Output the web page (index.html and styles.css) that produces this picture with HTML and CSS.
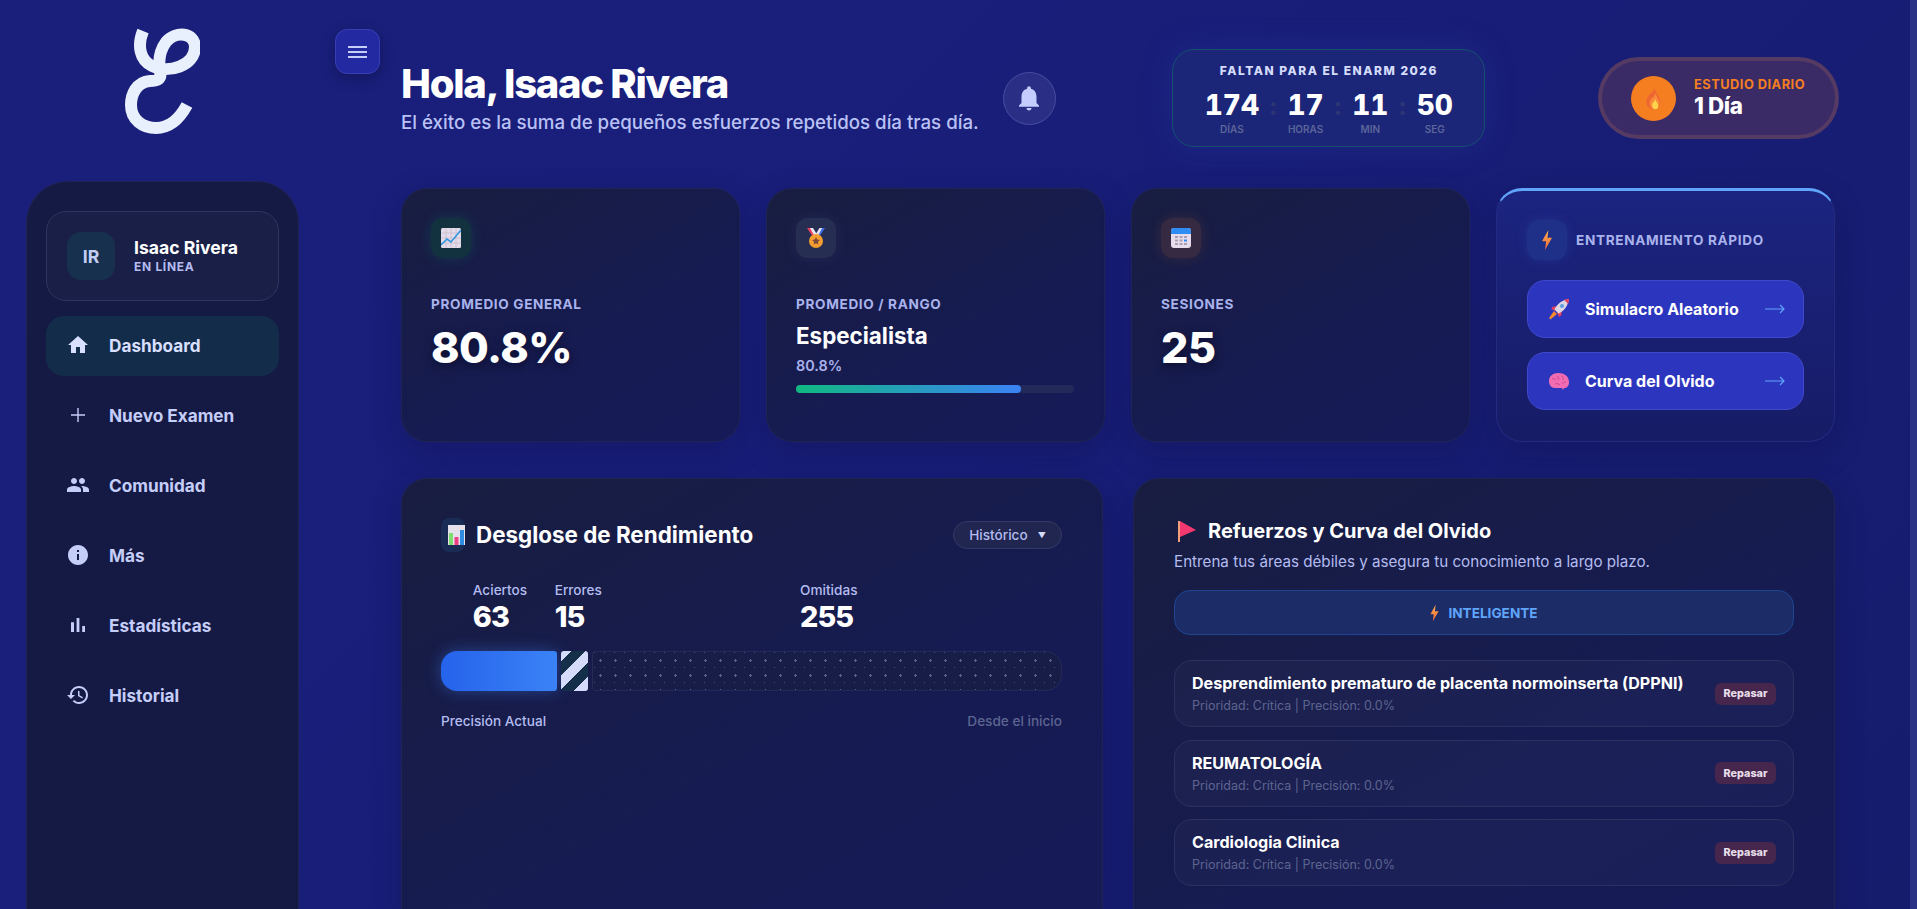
FILE: index.html
```html
<!DOCTYPE html>
<html lang="es">
<head>
<meta charset="utf-8">
<title>Dashboard</title>
<link rel="stylesheet" href="styles.css">
</head>
<body>
<svg class="defs" width="0" height="0" aria-hidden="true">
  <defs>
    <linearGradient id="boltg" x1="0" y1="0" x2="0" y2="1"><stop offset="0" stop-color="#fdb04a"/><stop offset="1" stop-color="#f4683c"/></linearGradient>
    <symbol id="bolt" viewBox="0 0 12 22"><path fill="url(#boltg)" d="M7.5 0 0.5 12.5H5L3.8 22 11.5 8.5H6.6z"/></symbol>
  </defs>
</svg>
<div class="page">
  <aside class="side-col">
    <div class="logo">
      <svg width="80" height="110" viewBox="120 25 80 110"><path fill="none" stroke="#e9f0fd" stroke-width="12" d="M143 31C137 46 140 60 152 66C168 74 195 66 195 47C195 33 176 30 166 42C160 50 158 60 160 72C162 80 156 81 150 81C136 82 131 95 131 105C131 120 143 128 156 128C170 128 180 118 187 105"/></svg>
    </div>
    <nav class="sidebar">
      <div class="user-card">
        <div class="avatar">IR</div>
        <div>
          <div class="user-name">Isaac Rivera</div>
          <div class="user-status">EN LÍNEA</div>
        </div>
      </div>
      <a class="nav-item active"><svg viewBox="0 0 24 24"><path d="M10 20v-6h4v6h5v-8h3L12 3 2 12h3v8z"/></svg>Dashboard</a>
      <a class="nav-item"><svg viewBox="0 0 24 24"><path d="M19 12.700h-6.300V19h-1.400v-6.300H5v-1.400h6.300V5h1.400v6.300H19z"/></svg>Nuevo Examen</a>
      <a class="nav-item"><svg viewBox="0 0 24 24"><path d="M16 11c1.660 0 2.990-1.340 2.990-3S17.660 5 16 5c-1.660 0-3 1.340-3 3s1.340 3 3 3zm-8 0c1.660 0 2.990-1.340 2.990-3S9.660 5 8 5C6.340 5 5 6.340 5 8s1.340 3 3 3zm0 2c-2.330 0-7 1.170-7 3.500V19h14v-2.500c0-2.330-4.670-3.500-7-3.500zm8 0c-.290 0-.620.020-.970.050 1.160.840 1.970 1.970 1.970 3.450V19h6v-2.500c0-2.330-4.670-3.500-7-3.500z"/></svg>Comunidad</a>
      <a class="nav-item"><svg viewBox="0 0 24 24"><path d="M12 2C6.480 2 2 6.480 2 12s4.480 10 10 10 10-4.480 10-10S17.520 2 12 2zm1 15h-2v-6h2v6zm0-8h-2V7h2v2z"/></svg>Más</a>
      <a class="nav-item"><svg viewBox="0 0 24 24"><path d="M5 9.200h3V19H5zM10.600 5h2.800v14h-2.800zm5.600 8H19v6h-2.800z"/></svg>Estadísticas</a>
      <a class="nav-item"><svg viewBox="0 0 24 24"><path d="M13 3c-4.970 0-9 4.030-9 9H1l3.890 3.890.070.140L9 12H6c0-3.870 3.130-7 7-7s7 3.130 7 7-3.130 7-7 7c-1.930 0-3.680-.790-4.940-2.060l-1.420 1.420C8.270 19.990 10.510 21 13 21c4.970 0 9-4.030 9-9s-4.030-9-9-9zm-1 5v5l4.280 2.540.720-1.210-3.500-2.080V8H12z"/></svg>Historial</a>
    </nav>
  </aside>

  <div class="toggle-col">
    <button class="menu-btn"><svg width="19" height="14" viewBox="0 0 19 14"><path fill="#c5cdf9" d="M0 1h19v2H0zM0 6h19v2H0zM0 11h19v2H0z"/></svg></button>
  </div>

  <main class="content">
    <header class="top">
      <div class="greet-group">
        <div>
          <h1 class="hello">Hola, Isaac Rivera</h1>
          <p class="motto">El éxito es la suma de pequeños esfuerzos repetidos día tras día.</p>
        </div>
        <div class="bell"><svg width="30" height="30" viewBox="0 0 24 24"><path fill="#c5cdff" d="M12 22c1.100 0 2-.900 2-2h-4c0 1.100.890 2 2 2zm6-6v-5c0-3.070-1.640-5.640-4.500-6.320V4c0-.830-.670-1.500-1.500-1.500s-1.500.670-1.500 1.500v.680C7.630 5.360 6 7.920 6 11v5l-2 2v1h16v-1l-2-2z"/></svg></div>
      </div>
      <div class="timer">
        <div class="timer-title">FALTAN PARA EL ENARM 2026</div>
        <div class="timer-row">
          <div class="tunit"><span class="tnum">174</span><span class="tlab">DÍAS</span></div>
          <span class="tsep">:</span>
          <div class="tunit"><span class="tnum">17</span><span class="tlab">HORAS</span></div>
          <span class="tsep">:</span>
          <div class="tunit"><span class="tnum">11</span><span class="tlab">MIN</span></div>
          <span class="tsep">:</span>
          <div class="tunit"><span class="tnum">50</span><span class="tlab">SEG</span></div>
        </div>
      </div>
      <div class="streak">
        <div class="flame"><svg width="18" height="24" viewBox="0 0 22 30"><path fill="#e9573f" opacity=".6" d="M13 1C14 7 5 10 3 17C1 24 6 29 11 29C17 29 21 24 20 18C19 13 14 9 13 1z"/><path fill="#f98a3a" d="M14 8C15 13 8 14 7 20C6 25 9 29 13 29C17 29 20 25 19 20C18 16 15 13 14 8z"/><path fill="#fdd34c" d="M13.500 16C14 20 10 20 10 24C10 27 12 29 14 29C16 29 18 27 17.500 24C17 21 14.500 19 13.500 16z"/></svg></div>
        <div>
          <div class="streak-label">ESTUDIO DIARIO</div>
          <div class="streak-val">1 Día</div>
        </div>
      </div>
    </header>

    <section class="cards">
      <article class="stat-card">
        <div class="stat-icon glow-green">
          <svg width="20" height="20" viewBox="0 0 20 20"><rect width="20" height="20" rx="1.500" fill="#e4dbe9"/><path stroke="#c7bccd" stroke-width=".8" fill="none" d="M0 5h20M0 10h20M0 15h20M5 0v20M10 0v20M15 0v20"/><path stroke="#2f97e0" stroke-width="1.600" fill="none" d="M0 17L6 11L10 14L20 2"/></svg>
        </div>
        <div class="stat-label">PROMEDIO GENERAL</div>
        <div class="stat-value">80.8%</div>
      </article>
      <article class="stat-card">
        <div class="stat-icon glow-slate">
          <svg width="20" height="20" viewBox="0 0 20 20"><path fill="#e8415f" d="M1 0h4l6 9H7z"/><path fill="#e8e4f2" d="M4 0h3l5 8-3 1z"/><path fill="#3f6fe0" d="M19 0h-4l-6 9h4z"/><path fill="#e8e4f2" d="M16 0h-2.500l-5 8 3 1z"/><circle cx="10" cy="13" r="7" fill="#f59e2f"/><path fill="#7a4a3a" d="M10 9l1.200 2.600 2.800.300-2.100 1.900.600 2.800-2.500-1.400-2.500 1.400.600-2.800-2.100-1.900 2.800-.300z"/></svg>
        </div>
        <div class="stat-label">PROMEDIO / RANGO</div>
        <div class="rank-name">Especialista</div>
        <div class="rank-pct">80.8%</div>
        <div class="track"><div class="fill"></div></div>
      </article>
      <article class="stat-card">
        <div class="stat-icon glow-brown">
          <svg width="20" height="20" viewBox="0 0 20 20"><rect width="20" height="20" rx="3" fill="#e6dcec"/><path fill="#2f8cf5" d="M0 6V3a3 3 0 0 1 3-3h14a3 3 0 0 1 3 3v3z"/><path fill="#a89fb3" d="M4 8h3v2H4zM8.500 8h3v2h-3zM13 8h3v2h-3zM4 11.500h3v2H4zM8.500 11.500h3v2h-3zM4 15h3v2H4zM8.500 15h3v2h-3zM13 15h3v2h-3z"/><path fill="#2f8cf5" d="M13 11.500h3v2h-3z"/></svg>
        </div>
        <div class="stat-label">SESIONES</div>
        <div class="stat-value">25</div>
      </article>
      <article class="quick-card">
        <div class="quick-head">
          <div class="quick-icon"><svg width="12" height="20"><use href="#bolt"/></svg></div>
          <span class="stat-label">ENTRENAMIENTO RÁPIDO</span>
        </div>
        <a class="quick-btn">
          <svg class="qicon" width="22" height="22" viewBox="0 0 22 22"><path fill="#f58a2f" d="M6 13l3 3-6 5c-1 .600-2-.400-1.600-1.400z"/><path fill="#e8415f" d="M5 8.500h5L8 13 3 11zM13.500 17v-5L9 14l2 5z"/><path fill="#dcd6e4" d="M6.500 11.500C9 6 14 2 21 1c-1 7-5 12-10.500 14.500z"/><path fill="#e8415f" d="M16 1.800c1.600-.400 3.300-.700 5-.800-.100 1.700-.400 3.400-.800 5z"/><circle cx="14" cy="8" r="2" fill="#5da0e0"/></svg>
          <span class="quick-txt">Simulacro Aleatorio</span>
          <svg class="arrow" width="20" height="10" viewBox="0 0 20 10"><path fill="none" stroke="#60a5fa" stroke-width="1.200" d="M0 5h19M15 1l4 4-4 4"/></svg>
        </a>
        <a class="quick-btn">
          <svg class="qicon" width="22" height="22" viewBox="0 0 22 22"><path fill="#f26cb3" d="M1 11C1 6 5 3 10 3c6 0 11 3 11 9 0 4-2 6-5 6l-1 2-1-2H7C3 18 1 15 1 11z"/><path fill="none" stroke="#c94a93" d="M4 9c2-1 3 0 4 1M9 6c2 1 2 3 1 4M13 6c2 0 3 2 2 4M7 14c2-1 4 0 5 1M14 13c2 0 4-1 4-2"/></svg>
          <span class="quick-txt">Curva del Olvido</span>
          <svg class="arrow" width="20" height="10" viewBox="0 0 20 10"><path fill="none" stroke="#60a5fa" stroke-width="1.200" d="M0 5h19M15 1l4 4-4 4"/></svg>
        </a>
      </article>
    </section>

    <section class="panels">
      <article class="panel">
        <div class="perf-head">
          <div class="perf-title">
            <span class="perf-icon"><svg width="17" height="20" viewBox="0 0 17 20"><rect width="17" height="20" fill="#e6e0ea"/><rect x="1" y="8" width="4" height="12" fill="#7fdc6f"/><rect x="6.500" y="12" width="4" height="8" fill="#ee3f86"/><rect x="12" y="5" width="4" height="15" fill="#2f8ce0"/></svg></span>
            <h2 class="panel-title">Desglose de Rendimiento</h2>
          </div>
          <div class="select">Histórico<span class="caret">▼</span></div>
        </div>
        <div class="breakdown">
          <div class="bk g63"><div class="nudge-a"><div class="bk-label">Aciertos</div><div class="bk-val">63</div></div></div>
          <div class="bk g15"><div class="nudge-l"><div class="bk-label">Errores</div><div class="bk-val">15</div></div></div>
          <div class="bk g255"><div class="nudge-s"><div class="bk-label">Omitidas</div><div class="bk-val">255</div></div></div>
        </div>
        <div class="bar">
          <div class="seg g63 seg-blue"></div>
          <div class="seg g15 seg-stripe"></div>
          <div class="seg g255 seg-dots"></div>
        </div>
        <div class="bar-foot"><span>Precisión Actual</span><span class="muted">Desde el inicio</span></div>
      </article>

      <article class="panel refs">
        <div class="ref-head">
          <svg width="24" height="22" viewBox="0 0 24 22"><path fill="#f2a07a" d="M4 1h2v21H4z"/><path fill="#f2386f" d="M6 1l16 9L6 17z"/></svg>
          <h2 class="panel-title small">Refuerzos y Curva del Olvido</h2>
        </div>
        <p class="ref-sub">Entrena tus áreas débiles y asegura tu conocimiento a largo plazo.</p>
        <a class="smart-btn"><svg width="9" height="18"><use href="#bolt"/></svg>INTELIGENTE</a>
        <div class="ref-list">
          <div class="ref-item">
            <div><div class="ref-name">Desprendimiento prematuro de placenta normoinserta (DPPNI)</div><div class="ref-meta">Prioridad: Crítica | Precisión: 0.0%</div></div>
            <a class="review">Repasar</a>
          </div>
          <div class="ref-item">
            <div><div class="ref-name">REUMATOLOGÍA</div><div class="ref-meta">Prioridad: Crítica | Precisión: 0.0%</div></div>
            <a class="review">Repasar</a>
          </div>
          <div class="ref-item">
            <div><div class="ref-name">Cardiologia Clinica</div><div class="ref-meta">Prioridad: Crítica | Precisión: 0.0%</div></div>
            <a class="review">Repasar</a>
          </div>
        </div>
      </article>
    </section>
  </main>
</div>
<div class="scrollbar"></div>
</body>
</html>
```

FILE: styles.css
```css
* { box-sizing: border-box; }
html { background: #181e78; overflow: hidden; }
body {
  margin: 0;
  font-family: Inter, "Liberation Sans", sans-serif;
  color: #fff;
  background: linear-gradient(135deg, #1a1f7c 0%, #181e78 50%, #161c6c 100%);
  height: 909px;
  overflow: hidden;
}
h1, h2, p { margin: 0; }
.defs { position: absolute; }
.scrollbar { position: fixed; top: 0; right: 0; bottom: 0; width: 7px; background: #2a3285; }
.page { display: flex; align-items: stretch; min-height: 960px; }

.side-col { width: 299px; margin-left: 26px; display: flex; flex-direction: column; flex: none; }
.logo { height: 181px; padding-top: 25px; padding-left: 94px; }
.logo svg { display: block; }
.sidebar {
  flex: 1;
  background: #151a45;
  border: 1px solid #1f2450;
  border-bottom: 0;
  border-radius: 42px 42px 0 0;
  padding: 29px 19px 0;
  display: flex;
  flex-direction: column;
  gap: 10px;
  width: 273px;
}
.user-card {
  height: 90px;
  border: 1px solid #2f3560;
  border-radius: 20px;
  background: #1a1f48;
  display: flex;
  align-items: center;
  gap: 19px;
  padding-left: 20px;
  margin-bottom: 5px;
}
.avatar {
  width: 48px; height: 48px; border-radius: 14px;
  background: #17304d; color: #c5cdf5;
  display: flex; align-items: center; justify-content: center;
  font-size: 17.6px; font-weight: 700;
}
.user-name { font-size: 17.6px; font-weight: 700; line-height: 22px; }
.user-status { font-size: 12px; font-weight: 700; color: #b4bcf0; letter-spacing: .7px; line-height: 16px; }
.nav-item {
  height: 60px; border-radius: 18px;
  display: flex; align-items: center; gap: 19px;
  padding: 0 0 2px 20px;
  font-size: 17.2px; font-weight: 700; color: #c5cdf9;
}
.nav-item svg { width: 24px; height: 24px; fill: #c5cdf9; flex: none; }
.nav-item.active { background: #132c4a; color: #d8dfff; }
.nav-item.active svg { fill: #d8dfff; }

.toggle-col { width: 45px; margin-left: 10px; margin-right: 21px; flex: none; padding-top: 29px; }
.menu-btn {
  width: 45px; height: 45px; padding: 0;
  border-radius: 12px;
  background: #2329a0;
  border: 1px solid #383fb5;
  box-shadow: 0 4px 14px rgba(0,0,10,.25);
  display: flex; align-items: center; justify-content: center;
}

.content { width: 1434px; flex: none; padding-top: 49px; }
.top { display: flex; align-items: center; justify-content: space-between; height: 98px; }
.greet-group { display: flex; align-items: center; gap: 24px; }
.hello { font-size: 40px; font-weight: 800; letter-spacing: -1.28px; line-height: 46px; margin-top: -1px; }
.motto { font-size: 18.72px; font-weight: 500; color: #b9c1f5; line-height: 24px; margin-top: 4px; }
.bell {
  width: 53px; height: 53px; border-radius: 50%;
  background: #2a2f85; border: 1px solid #474da0;
  display: flex; align-items: center; justify-content: center;
}
.timer {
  width: 313px; height: 98px;
  border: 1px solid #15506f;
  border-radius: 22px;
  background: #1b2678;
  box-shadow: 0 0 30px rgba(40,60,170,.3);
  display: flex; flex-direction: column; align-items: center;
  padding-top: 13px;
}
.timer-title { font-size: 12px; font-weight: 800; letter-spacing: 1.5px; color: #d5dcfb; line-height: 16px; }
.timer-row { display: flex; align-items: flex-start; gap: 10px; margin-top: 8px; }
.tunit { display: flex; flex-direction: column; align-items: center; }
.tnum { font-size: 28px; font-weight: 800; line-height: 36px; font-variant-numeric: tabular-nums; }
.tlab { font-size: 10px; font-weight: 600; color: #5c6598; line-height: 12px; }
.tsep { font-size: 24px; font-weight: 800; color: #2d3575; line-height: 40px; }
.streak {
  width: 233px; height: 74px;
  border-radius: 37px;
  background: #3a2b66;
  box-shadow: 0 0 0 4px #553a63;
  display: flex; align-items: center; gap: 18px;
  padding-left: 29px;
}
.flame {
  width: 45px; height: 45px; border-radius: 50%; background: #f57f20;
  display: flex; align-items: center; justify-content: center;
}
.streak-label { font-size: 12.8px; font-weight: 700; color: #f57f20; letter-spacing: .5px; line-height: 16px; }
.streak-val { font-size: 22.4px; font-weight: 800; line-height: 26px; letter-spacing: -.4px; }

.cards { display: grid; grid-template-columns: repeat(4, 339px); gap: 26px; margin-top: 41px; }
.stat-card, .panel {
  border: 1px solid #1f2450;
  background: linear-gradient(150deg, #181d40 0%, #161b52 60%, #161a58 100%);
  box-shadow: 0 10px 30px rgba(10,12,60,.25);
}
.stat-card { border-radius: 26px; padding: 29px; height: 254px; }
.stat-icon { width: 40px; height: 40px; border-radius: 12px; display: flex; align-items: center; justify-content: center; margin-bottom: 38px; }
.glow-green { background: #12323f; box-shadow: 0 0 14px rgba(16,185,129,.18); }
.glow-slate { background: #262e52; box-shadow: 0 0 14px rgba(120,130,190,.12); }
.glow-brown { background: #352a42; box-shadow: 0 0 14px rgba(245,127,32,.14); }
.stat-label { font-size: 13.6px; font-weight: 700; color: #a9b2ec; letter-spacing: .65px; line-height: 16px; }
.stat-value { font-size: 43px; font-weight: 800; letter-spacing: -.5px; line-height: 48px; margin-top: 11px; text-shadow: 0 3px 10px rgba(0,0,20,.5); }
.rank-name { font-size: 22.4px; font-weight: 700; line-height: 28px; margin-top: 10px; }
.rank-pct { font-size: 14.4px; font-weight: 600; color: #a9b2ec; line-height: 20px; margin-top: 6px; }
.track { height: 8px; border-radius: 4px; background: #232a5a; margin-top: 9px; width: 278px; }
.fill { width: 80.8%; height: 100%; border-radius: 4px; background: linear-gradient(90deg, #10b981, #3b82f6); }

.quick-card {
  border: 1px solid #232a80;
  border-top: 3px solid #60a5fa;
  border-radius: 26px;
  background: linear-gradient(180deg, #1b2480 0%, #171c66 100%);
  padding: 29px 30px 0;
  height: 254px;
  box-shadow: 0 10px 30px rgba(10,12,60,.25);
}
.quick-head { display: flex; align-items: center; gap: 9px; margin-bottom: 20px; }
.quick-icon { width: 40px; height: 40px; border-radius: 12px; background: #1f3088; box-shadow: 0 0 12px rgba(60,90,200,.25); display: flex; align-items: center; justify-content: center; }
.quick-btn {
  height: 58px; border-radius: 18px;
  background: #2c35bd; border: 1px solid #4049cc;
  display: flex; align-items: center; padding: 0 18px 0 20px;
  margin-bottom: 14px;
  font-size: 16px; font-weight: 700;
}
.quick-txt { margin-left: 15px; }
.arrow { margin-left: auto; }

.panels { display: grid; grid-template-columns: 702px 702px; gap: 30px; margin-top: 36px; }
.panel { padding: 39px 40px 41px 39px; border-bottom: 0; border-radius: 26px 26px 0 0; }
.panel.refs { padding-left: 40px; }
.perf-head { display: flex; align-items: center; justify-content: space-between; height: 34px; }
.perf-title { display: flex; align-items: center; gap: 11px; }
.perf-icon { width: 24px; height: 34px; border-radius: 8px; background: #1a2b55; display: flex; align-items: center; justify-content: flex-end; }
.panel-title { font-size: 22.4px; font-weight: 700; line-height: 28px; }
.panel-title.small { font-size: 20px; line-height: 26px; }
.select {
  width: 109px; height: 28px; border-radius: 14px;
  border: 1px solid #333a66; background: #20264f;
  display: flex; align-items: center; justify-content: center; gap: 10px;
  font-size: 13.6px; font-weight: 500; color: #b4bcf0;
}
.caret { font-size: 8px; color: #d5dcfb; }
.breakdown { display: flex; gap: 4px; margin-top: 29px; }
.bk { display: flex; justify-content: center; min-width: 0; }
.nudge-a { margin-left: 2px; }
.nudge-l { margin-left: 7px; }
.nudge-s { margin-left: 3px; }
.bk-label { font-size: 13.6px; font-weight: 500; color: #b4bcf0; line-height: 18px; white-space: nowrap; }
.bk-val { font-size: 28.8px; font-weight: 800; letter-spacing: -1px; line-height: 36px; }
.g63 { flex: 63 1 0; }
.g15 { flex: 15 1 0; }
.g255 { flex: 255 1 0; }
.bar { display: flex; gap: 4px; height: 40px; margin-top: 16px; }
.seg { min-width: 0; }
.seg-blue { border-radius: 16px 3px 3px 16px; background: linear-gradient(90deg, #2563eb, #3b82f6); box-shadow: 0 0 16px rgba(59,130,246,.4); }
.seg-stripe { border-radius: 3px; background: repeating-linear-gradient(-45deg, #d5dcfb 0 10px, #152e4a 10px 20px); }
.seg-dots {
  border: 1px solid #232a58; border-radius: 3px 16px 16px 3px;
  background-color: #181d48;
  background-image: url("data:image/svg+xml,%3Csvg xmlns='http://www.w3.org/2000/svg' width='30' height='15'%3E%3Cpath fill='%235c6296' d='M7 7h1v1H7zM6 8h3v1H6zM7 9h1v1H7zM22 7h1v1h-1zM21 8h3v1h-3zM22 9h1v1h-1z'/%3E%3Cpath fill='%23464c80' d='M1 0h1v1H1zM11 0h1v1h-1zM21 0h1v1h-1z'/%3E%3C/svg%3E");
  background-size: 30px 15px;
}
.bar-foot { display: flex; justify-content: space-between; margin-top: 21px; font-size: 13.6px; font-weight: 500; line-height: 18px; color: #b4bcf0; }
.muted { color: #5d6590; }

.ref-head { display: flex; align-items: center; gap: 10px; height: 26px; }
.ref-sub { font-size: 15.2px; color: #b4bcf0; line-height: 22px; margin-top: 7px; }
.smart-btn {
  height: 45px; border-radius: 16px; margin-top: 17px;
  border: 1px solid #1e4590; background: #1b2c66;
  display: flex; align-items: center; justify-content: center; gap: 9px;
  font-size: 13.6px; font-weight: 700; color: #60a5fa;
}
.ref-list { margin-top: 25px; display: flex; flex-direction: column; gap: 12.5px; }
.ref-item {
  height: 67px; border: 1px solid #2c3260; border-radius: 18px;
  background: rgba(255,255,255,.025);
  padding: 11px 17px;
  display: flex; align-items: center; justify-content: space-between;
}
.ref-name { font-size: 16.1px; font-weight: 700; line-height: 22px; }
.ref-meta { font-size: 12.5px; color: #5d6590; line-height: 18px; margin-top: 3px; }
.review {
  width: 61px; height: 22px; border-radius: 6px; background: #47264d;
  display: flex; align-items: center; justify-content: center;
  font-size: 10.8px; font-weight: 800; color: #e6dfea;
}
```
